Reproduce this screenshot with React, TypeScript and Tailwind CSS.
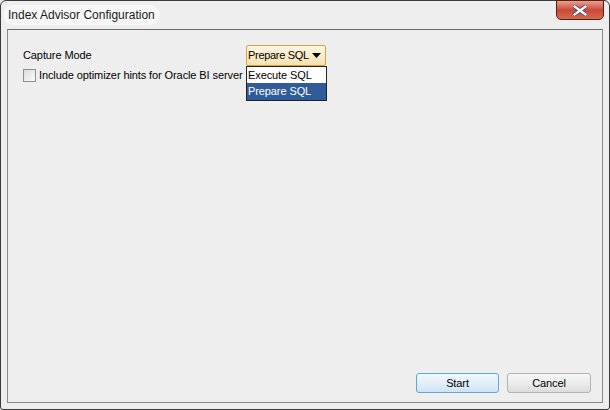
import React from "react";

export default function App() {
  return (
    <div
      className="w-[610px] h-[410px] relative overflow-hidden bg-[#eaeaea]"
      style={{ fontFamily: "'Liberation Sans', Arial, sans-serif" }}
    >
      {/* Window frame */}
      <div className="absolute inset-0 rounded-t-[6px] rounded-b-[3px] border border-[#3a3a3a] bg-[#eeeeee] flex flex-col">
        {/* Title bar */}
        <div className="h-[28px] flex items-start relative">
          <div className="ml-[2px] mt-[4px] px-[5px] h-[20px] flex items-center rounded-full bg-[#f7f7f7] text-[12px] text-[#1a1a1a]">
            Index Advisor Configuration
          </div>
          {/* Close button */}
          <div className="absolute right-[5px] top-[-1px] w-[48px] h-[20px] rounded-b-[5px] border border-[#5a1d14] bg-gradient-to-b from-[#e8a08f] via-[#c9483a] to-[#d66a4f] flex items-center justify-center">
            <svg width="14" height="11" viewBox="0 0 14 11">
              <path
                d="M1.5 1.5 L12.5 9.5 M12.5 1.5 L1.5 9.5"
                stroke="#4a4f6a"
                strokeWidth="4"
                strokeLinecap="square"
              />
              <path
                d="M1.5 1.5 L12.5 9.5 M12.5 1.5 L1.5 9.5"
                stroke="#ffffff"
                strokeWidth="2.2"
                strokeLinecap="square"
              />
            </svg>
          </div>
        </div>

        {/* Client area */}
        <div className="mx-[6px] mb-[6px] flex-1 border border-[#8a8a8a] border-t-[#6b6b6b] bg-[#eeeeee] flex flex-col text-[11px] tracking-[-0.1px] text-black whitespace-nowrap">
          <div className="pt-[15px] pl-[15px] flex flex-col">
            <div className="flex items-center h-[21px]">
              <span className="w-[223px]">Capture Mode</span>
              <div className="relative">
                <div className="w-[80px] h-[21px] border border-[#d7a13e] rounded-[2px] bg-gradient-to-b from-[#fdf6e2] to-[#f5e2b0] flex items-center pl-[1px]">
                  <span className="flex-1 tracking-[-0.3px]">Prepare SQL</span>
                  <svg width="9" height="5" viewBox="0 0 9 5" className="mr-[4px]">
                    <path d="M0 0 L9 0 L4.5 5 Z" fill="#000" />
                  </svg>
                </div>
                {/* Dropdown list */}
                <div className="absolute left-0 top-[21px] w-[81px] border border-[#222] bg-white flex flex-col">
                  <div className="h-[16px] flex items-center pl-[1px]">Execute SQL</div>
                  <div className="h-[17px] flex items-center pl-[1px] bg-[#2f5b9b] text-white">Prepare SQL</div>
                </div>
              </div>
            </div>
            <div className="flex items-center mt-[1px] h-[16px]">
              <div className="w-[13px] h-[13px] border border-[#8e8f8f] bg-gradient-to-br from-[#dcdcdc] to-[#fafafa]" />
              <span className="ml-[3px]">Include optimizer hints for Oracle BI server</span>
            </div>
          </div>

          <div className="flex-1" />

          <div className="flex justify-end gap-[8px] pr-[11px] pb-[9px]">
            <button className="w-[83px] h-[20px] rounded-[3px] border border-[#5fa7d8] bg-gradient-to-b from-[#eef7fd] via-[#e3eff8] to-[#cfe3f3] text-[11px]">
              Start
            </button>
            <button className="w-[84px] h-[20px] rounded-[3px] border border-[#b4b4b4] bg-gradient-to-b from-[#f6f6f6] via-[#ececec] to-[#dcdcdc] text-[11px]">
              Cancel
            </button>
          </div>
        </div>
      </div>
    </div>
  );
}
